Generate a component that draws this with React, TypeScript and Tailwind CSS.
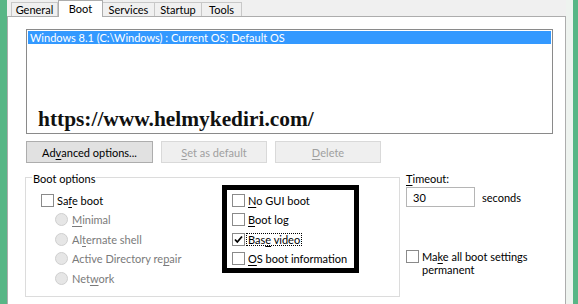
import React from "react";

const U = ({ children }: { children: React.ReactNode }) => <span className="underline underline-offset-[2px] decoration-1">{children}</span>;

function Check({ checked = false }: { checked?: boolean }) {
  return (
    <div className="w-[13px] h-[13px] border border-[#8a8a8a] bg-white shrink-0 flex items-center justify-center">
      {checked && (
        <svg width="9" height="9" viewBox="0 0 9 9">
          <path d="M1 4.5 L3.3 7 L8 1.5" stroke="#000" strokeWidth="1.8" fill="none" />
        </svg>
      )}
    </div>
  );
}

function Radio() {
  return <div className="w-[13px] h-[13px] rounded-full border border-[#cfcfcf] bg-[#e6e6e6] shrink-0" />;
}

export default function App() {
  return (
    <div
      className="w-[578px] h-[304px] overflow-hidden flex bg-[#f0f0f0] text-[11px] text-black leading-none"
      style={{ fontFamily: 'Lato, "Noto Sans", sans-serif' }}
    >
      <div className="w-[7px] bg-[#58b686] shrink-0" />
      <div className="flex flex-col w-[559px] shrink-0">
        {/* tabs */}
        <div className="h-[16px] flex items-end pl-[4px] shrink-0">
          <div className="h-[14px] w-[47px] border border-b-0 border-[#c8c8c8] bg-[#f0f0f0] flex items-center justify-center">General</div>
          <div className="h-[17px] w-[45px] -mb-[1px] border border-b-0 border-[#adadad] bg-white relative z-10 flex items-start pt-[2px] justify-center">Boot</div>
          <div className="h-[14px] w-[52px] border border-b-0 border-l-0 border-[#c8c8c8] bg-[#f0f0f0] flex items-center justify-center">Services</div>
          <div className="h-[14px] w-[47px] border border-b-0 border-l-0 border-[#c8c8c8] bg-[#f0f0f0] flex items-center justify-center">Startup</div>
          <div className="h-[14px] w-[40px] border border-b-0 border-l-0 border-[#c8c8c8] bg-[#f0f0f0] flex items-center justify-center">Tools</div>
        </div>
        {/* page */}
        <div className="flex-1 border border-b-0 border-[#adadad] bg-white pl-[18px] pt-[12px]">
          {/* listbox */}
          <div className="w-[527px] h-[105px] border border-[#8a8a8a] p-[1px] flex flex-col">
            <div className="h-[13px] bg-[#3399ff] text-white flex items-center pl-[2px] whitespace-nowrap">
              Windows 8.1 (C:\Windows) : Current OS; Default OS
            </div>
            <div
              className="mt-[65px] ml-[10px] text-[21.4px] font-bold text-[#111] leading-none whitespace-nowrap"
              style={{ fontFamily: '"Liberation Serif", serif' }}
            >
              https://www.helmykediri.com/
            </div>
          </div>
          {/* buttons */}
          <div className="flex gap-[8px] mt-[7px]">
            <div className="w-[127px] h-[22px] border border-[#adadad] bg-[#e1e1e1] flex items-center justify-center">
              Ad<U>v</U>anced options...
            </div>
            <div className="w-[106px] h-[22px] border border-[#d9d9d9] bg-[#efefef] text-[#a0a0a0] flex items-center justify-center">
              <U>S</U>et as default
            </div>
            <div className="w-[106px] h-[22px] border border-[#d9d9d9] bg-[#efefef] text-[#a0a0a0] flex items-center justify-center">
              <U>D</U>elete
            </div>
          </div>
          {/* lower */}
          <div className="flex mt-[14px] -ml-[1px]">
            <div className="relative w-[375px] h-[120px] border border-[#dcdcdc] flex shrink-0">
              <div className="absolute -top-[7px] left-[6px] bg-white px-[1px] h-[14px] flex items-center">Boot options</div>
              <div className="flex flex-col pl-[15px] pt-[12px] w-[196px]">
                <div className="h-[20px] flex items-center gap-[3px]">
                  <Check />
                  <span>Sa<U>f</U>e boot</span>
                </div>
                <div className="pl-[14px] text-[#7a7a7a]">
                  {[
                    <><U>M</U>inimal</>,
                    <>Al<U>t</U>ernate shell</>,
                    <>Active Directory re<U>p</U>air</>,
                    <>Net<U>w</U>ork</>,
                  ].map((t, i) => (
                    <div key={i} className="h-[19.5px] flex items-center gap-[4px]">
                      <Radio />
                      <span>{t}</span>
                    </div>
                  ))}
                </div>
              </div>
              <div className="mt-[7px] w-[137px] h-[88px] border-[5px] border-black pl-[5px] pt-[1px] flex flex-col shrink-0">
                {[
                  { t: <><U>N</U>o GUI boot</>, c: false },
                  { t: <><U>B</U>oot log</>, c: false },
                  { t: <>Bas<U>e</U> video</>, c: true },
                  { t: <><U>O</U>S boot information</>, c: false },
                ].map((r, i) => (
                  <div key={i} className="h-[19.5px] flex items-center gap-[3px] whitespace-nowrap">
                    <Check checked={r.c} />
                    <span className={r.c ? "outline outline-1 outline-dotted outline-black px-[1px] -ml-[1px]" : ""}>{r.t}</span>
                  </div>
                ))}
              </div>
            </div>
            <div className="ml-[6px] flex flex-col -mt-[6px]">
              <div className="h-[14px] flex items-center"><U>T</U>imeout:</div>
              <div className="flex items-center mt-[2px]">
                <div className="w-[69px] h-[20px] border border-[#b5b5b5] flex items-center pl-[6px]">30</div>
                <span className="ml-[7px]">seconds</span>
              </div>
              <div className="flex items-start gap-[3px] mt-[43px]">
                <Check />
                <div className="leading-[13px]">
                  Ma<U>k</U>e all boot settings<br />permanent
                </div>
              </div>
            </div>
          </div>
        </div>
      </div>
      <div className="w-[7px] bg-[#eef3ef] shrink-0" />
      <div className="flex-1 bg-[#58b686]" />
    </div>
  );
}
